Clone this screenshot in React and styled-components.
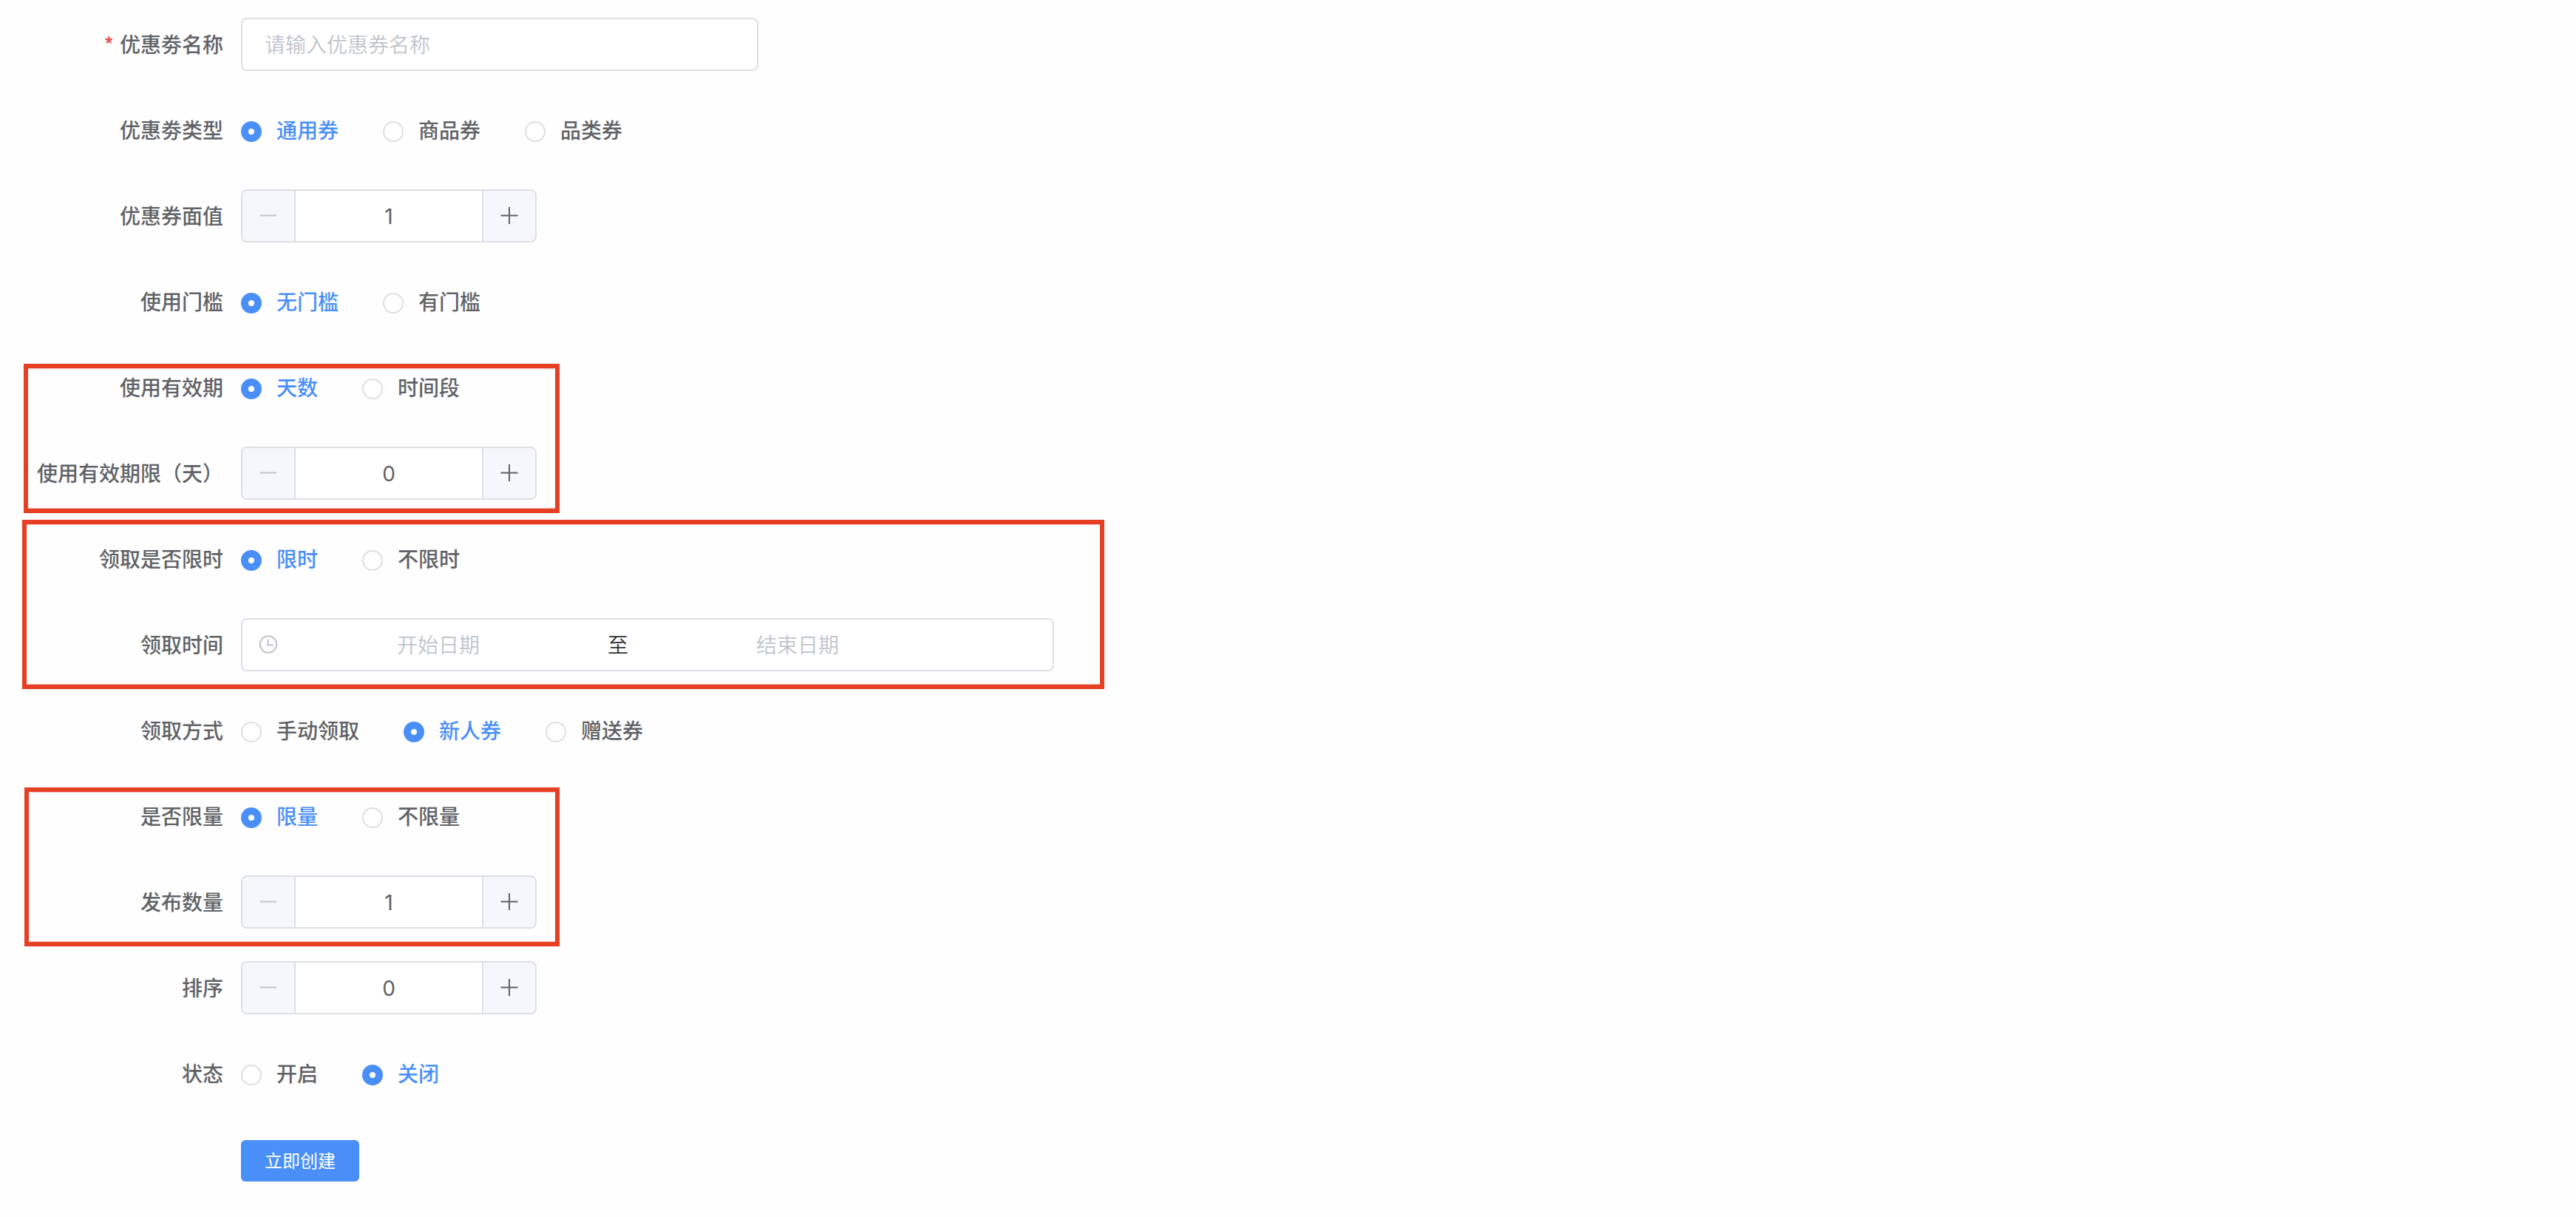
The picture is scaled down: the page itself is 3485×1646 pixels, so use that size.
import React from "react";
import styled, { createGlobalStyle } from "styled-components";

const GlobalStyle = createGlobalStyle`
    body {
        margin: 0;
        background: #fefefe;
        font-family: "Noto Sans CJK SC", sans-serif;
        font-size: 28px;
        color: #606266;
    }

    * {
        box-sizing: border-box;
    }
`;
const Form = styled.form`
    display: flex;
    flex-direction: column;
    gap: 44px;
    padding: 24px 0 42px;
`;
const Group = styled.div`
    position: relative;
    display: flex;
    flex-direction: column;
    gap: 44px;
`;
const Outline = styled.div`
    position: absolute;
    left: ${props => props.$left}px;
    top: ${props => props.$top}px;
    width: ${props => props.$width}px;
    height: ${props => props.$height}px;
    border: 6px solid #e63f24;
    box-shadow: inset 0 1px 0 rgba(230, 63, 36, 0.35), inset 0 -1px 0 rgba(230, 63, 36, 0.35);
    pointer-events: none;
`;
const Row = styled.div`
    display: flex;
    align-items: center;
    height: 72px;
`;
const Label = styled.label`
    width: 326px;
    height: 72px;
    padding-right: 24px;
    text-align: right;
    white-space: nowrap;
    line-height: 70px;
    font-weight: 500;
`;
const Required = styled.span`
    margin-right: 8px;
    color: #f0524f;
`;
const Input = styled.input`
    width: 700px;
    height: 72px;
    padding: 0 30px 2px;
    border: 2px solid #dcdfe6;
    border-radius: 8px;
    background: #fff;
    font: inherit;
    font-weight: 350;

    &::placeholder {
        color: #c0c4cc;
        opacity: 1;
    }
`;
const RadioGroup = styled.div`
    display: flex;
    gap: 60px;
`;
const RadioItem = styled.div`
    display: flex;
    align-items: center;
    gap: 20px;
    height: 72px;
    font-weight: 500;
    color: ${props => (props.$checked ? "#4a8ff7" : "#606266")};
`;
const RadioText = styled.span`
    height: 72px;
    line-height: 70px;
`;
const RadioDot = styled.span`
    width: 28px;
    height: 28px;
    margin-top: 4px;
    border-radius: 50%;
    background: #fff;
    border: ${props => (props.$checked ? "10px solid #4a8ff7" : "2px solid #dcdfe6")};
`;
const NumberBox = styled.div`
    display: flex;
    width: 400px;
    height: 72px;
    border: 2px solid #dcdfe6;
    border-radius: 8px;
    background: #fff;
    overflow: hidden;
`;
const StepButton = styled.div`
    display: flex;
    justify-content: center;
    align-items: center;
    width: 72px;
    background: #f5f7fa;
    color: ${props => (props.$disabled ? "#c0c4cc" : "#606266")};
    border-${props => props.$side}: 2px solid #dcdfe6;
`;
const NumberValue = styled.div`
    flex: 1;
    text-align: center;
    line-height: 70px;
    font-family: Inter, "Liberation Sans", sans-serif;
    font-weight: 400;
`;
const DateRange = styled.div`
    display: flex;
    align-items: center;
    width: 1100px;
    height: 72px;
    padding: 0 21px;
    border: 2px solid #dcdfe6;
    border-radius: 8px;
    background: #fff;
    color: #c0c4cc;
    font-weight: 350;
`;
const DatePart = styled.span`
    width: 430px;
    height: 68px;
    padding-left: 2px;
    text-align: center;
    line-height: 66px;
`;
const Separator = styled.span`
    width: 56px;
    height: 68px;
    padding-left: 2px;
    text-align: center;
    line-height: 66px;
    color: #303133;
`;
const Submit = styled.button`
    width: 160px;
    height: 56px;
    margin: 4px 0 0 326px;
    padding: 0 0 2px;
    border: 0;
    border-radius: 6px;
    background: #4a8ff7;
    color: #fff;
    font: inherit;
    font-size: 24px;
    line-height: 54px;
`;

function MinusIcon() {
    return (
        <svg width="24" height="24" viewBox="0 0 24 24" fill="none" stroke="currentColor" strokeWidth="2">
            <path d="M1 11.5H23" />
        </svg>
    );
}

function PlusIcon() {
    return (
        <svg width="24" height="24" viewBox="0 0 24 24" fill="none" stroke="currentColor" strokeWidth="2">
            <path d="M0.5 11.5H23.5M12 0V23" />
        </svg>
    );
}

function ClockIcon() {
    return (
        <svg width="28" height="28" viewBox="0 0 28 28" fill="none" stroke="currentColor" strokeWidth="2">
            <circle cx="14" cy="13.5" r="11.2" />
            <path d="M13.4 7V14.6H21" />
        </svg>
    );
}

function Field({ label, required, children }) {
    return (
        <Row>
            <Label>
                {required && <Required>*</Required>}
                {label}
            </Label>
            {children}
        </Row>
    );
}

function RadioField({ label, options, value }) {
    return (
        <Field label={label}>
            <RadioGroup>
                {options.map(option => (
                    <RadioItem key={option} $checked={option === value}>
                        <RadioDot $checked={option === value} />
                        <RadioText>{option}</RadioText>
                    </RadioItem>
                ))}
            </RadioGroup>
        </Field>
    );
}

function NumberField({ label, value }) {
    return (
        <Field label={label}>
            <NumberBox>
                <StepButton $side="right" $disabled>
                    <MinusIcon />
                </StepButton>
                <NumberValue>{value}</NumberValue>
                <StepButton $side="left">
                    <PlusIcon />
                </StepButton>
            </NumberBox>
        </Field>
    );
}

export default function App() {
    return (
        <Form>
            <GlobalStyle />
            <Field label="优惠劵名称" required>
                <Input placeholder="请输入优惠券名称" />
            </Field>
            <RadioField label="优惠劵类型" options={["通用券", "商品券", "品类券"]} value="通用券" />
            <NumberField label="优惠券面值" value={1} />
            <RadioField label="使用门槛" options={["无门槛", "有门槛"]} value="无门槛" />
            <Group>
                <RadioField label="使用有效期" options={["天数", "时间段"]} value="天数" />
                <NumberField label="使用有效期限（天）" value={0} />
                <Outline $left={32} $top={4} $width={725} $height={202} />
            </Group>
            <Group>
                <RadioField label="领取是否限时" options={["限时", "不限时"]} value="限时" />
                <Field label="领取时间">
                    <DateRange>
                        <ClockIcon />
                        <DatePart>开始日期</DatePart>
                        <Separator>至</Separator>
                        <DatePart>结束日期</DatePart>
                    </DateRange>
                </Field>
                <Outline $left={30} $top={-17} $width={1464} $height={229} />
            </Group>
            <RadioField label="领取方式" options={["手动领取", "新人券", "赠送券"]} value="新人券" />
            <Group>
                <RadioField label="是否限量" options={["限量", "不限量"]} value="限量" />
                <NumberField label="发布数量" value={1} />
                <Outline $left={33} $top={-3} $width={724} $height={215} />
            </Group>
            <NumberField label="排序" value={0} />
            <RadioField label="状态" options={["开启", "关闭"]} value="关闭" />
            <Row>
                <Submit type="button">立即创建</Submit>
            </Row>
        </Form>
    );
}
